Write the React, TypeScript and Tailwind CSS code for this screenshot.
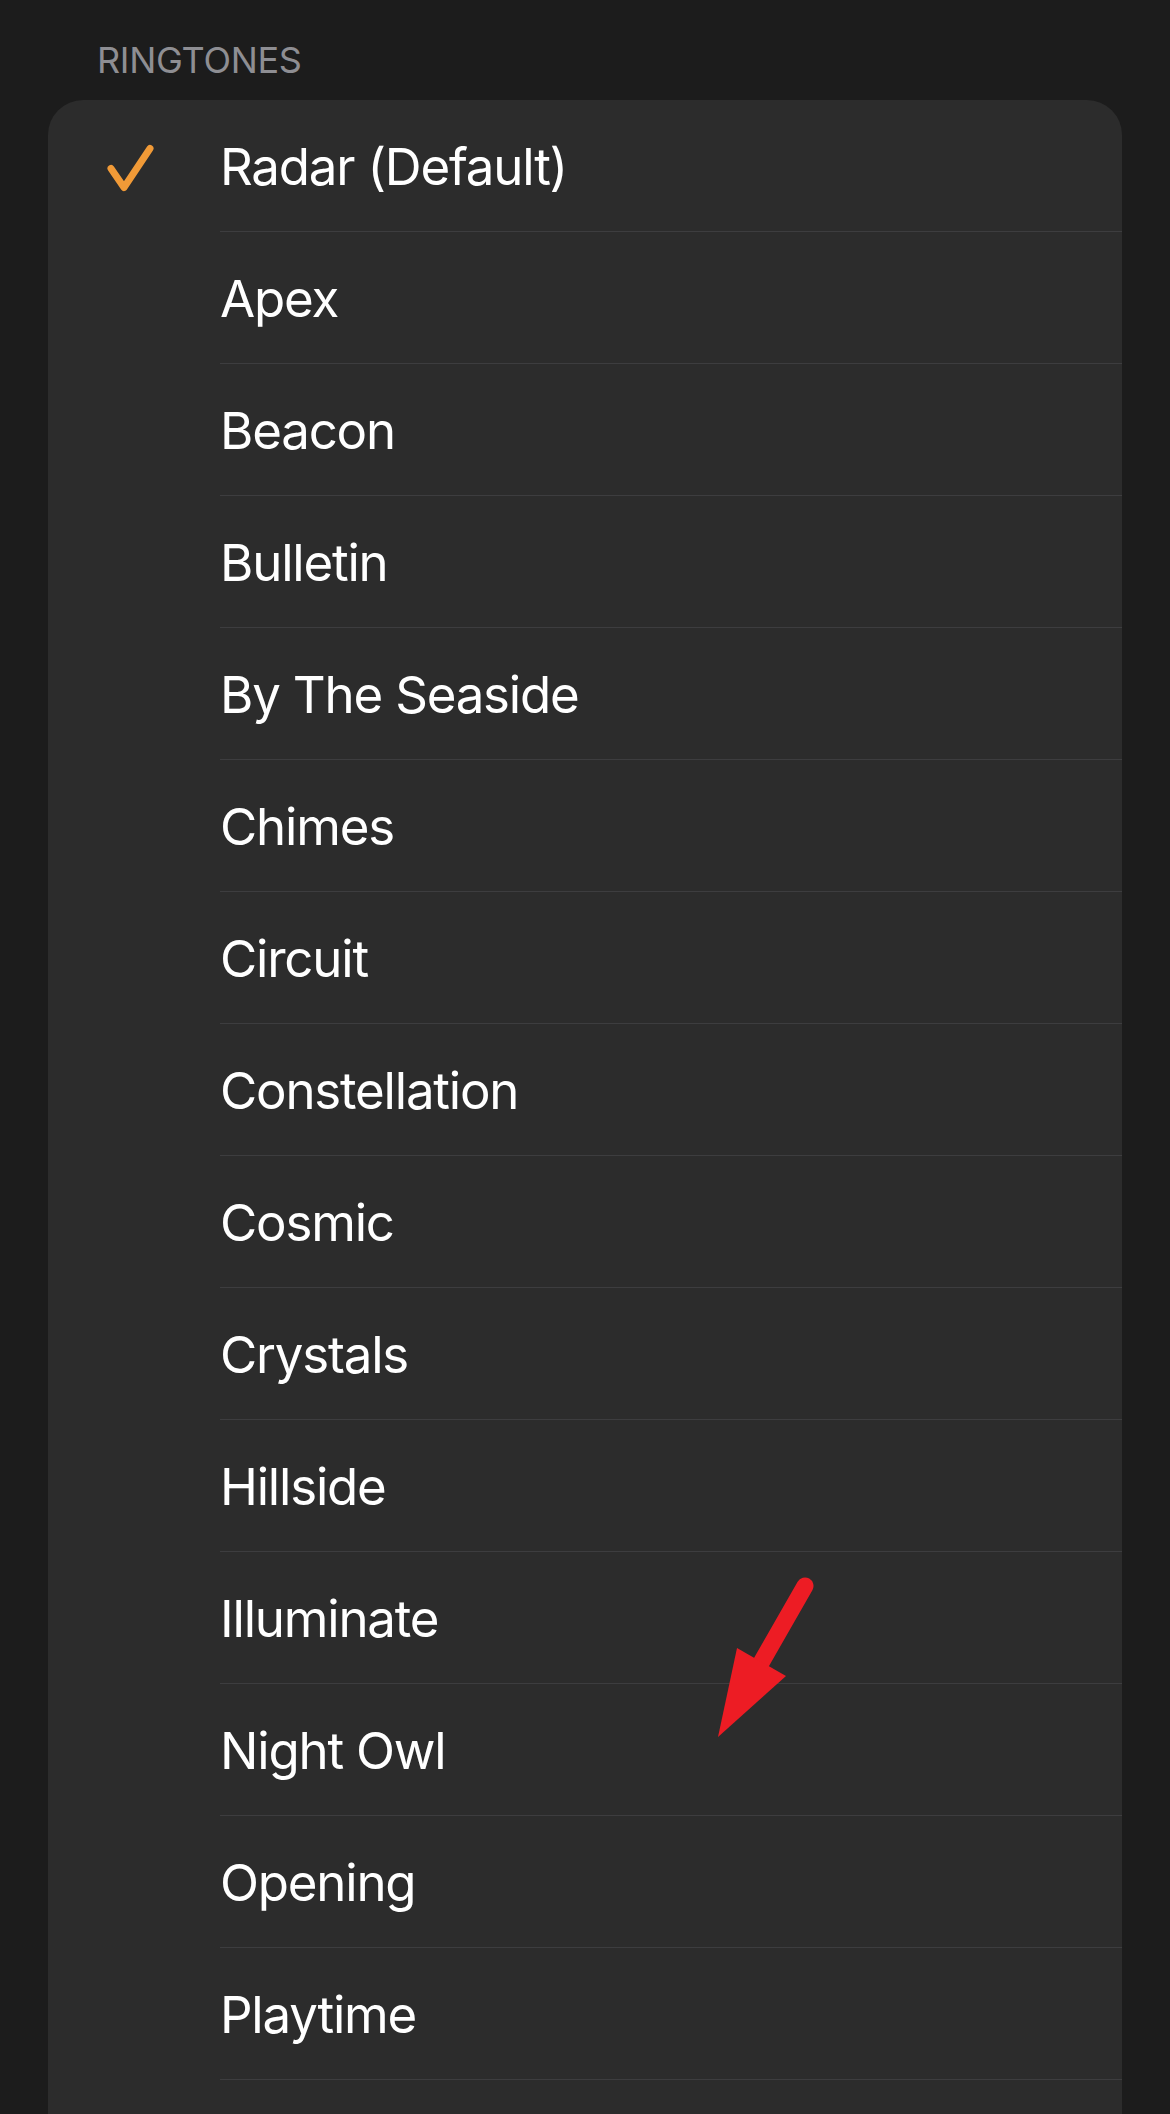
import React from 'react';

const RINGTONES = [
  'Radar (Default)',
  'Apex',
  'Beacon',
  'Bulletin',
  'By The Seaside',
  'Chimes',
  'Circuit',
  'Constellation',
  'Cosmic',
  'Crystals',
  'Hillside',
  'Illuminate',
  'Night Owl',
  'Opening',
  'Playtime',
];

function Check() {
  return (
    <svg width="52" height="52" viewBox="0 0 52 52" fill="none" className="ml-[56px]">
      <path
        d="M7 28.5 L20 47.5 L46 8.5"
        stroke="#f19a37"
        strokeWidth="7"
        strokeLinecap="round"
        strokeLinejoin="round"
      />
    </svg>
  );
}

function Row({ name, selected }: { name: string; selected: boolean }) {
  return (
    <div className="flex h-[132px]">
      <div className="w-[172px] shrink-0 flex items-center">{selected && <Check />}</div>
      <div className="flex-1 flex items-center pt-[3px] border-b border-[#3d3d3f] text-white text-[51px] tracking-[-1.2px]">
        {name}
      </div>
    </div>
  );
}

export default function App() {
  return (
    <div
      className="relative h-[2114px] overflow-hidden bg-[#1c1c1c]"
      style={{ fontFamily: 'Inter, "Noto Sans", sans-serif' }}
    >
      {/* Section header */}
      <div className="pt-[38px] pl-[97px] mb-[18px] text-[36px] leading-[44px] text-[#8e8e93] tracking-[-0.3px]">
        RINGTONES
      </div>

      {/* Ringtone list (continues past the bottom of the screen) */}
      <div className="mx-[48px] bg-[#2c2c2c] rounded-t-[35px] overflow-hidden">
        {RINGTONES.map((name, i) => (
          <Row key={name} name={name} selected={i === 0} />
        ))}
        <div className="h-[132px]" />
      </div>

      {/* Annotation arrow */}
      <svg
        className="absolute left-[700px] top-[1570px]"
        width="120"
        height="180"
        viewBox="0 0 120 180"
        fill="none"
      >
        <path d="M105 16 L61.5 92" stroke="#ed1c24" strokeWidth="17" strokeLinecap="round" />
        <path d="M37 78 L86 106 L18 167 Z" fill="#ed1c24" />
      </svg>
    </div>
  );
}
